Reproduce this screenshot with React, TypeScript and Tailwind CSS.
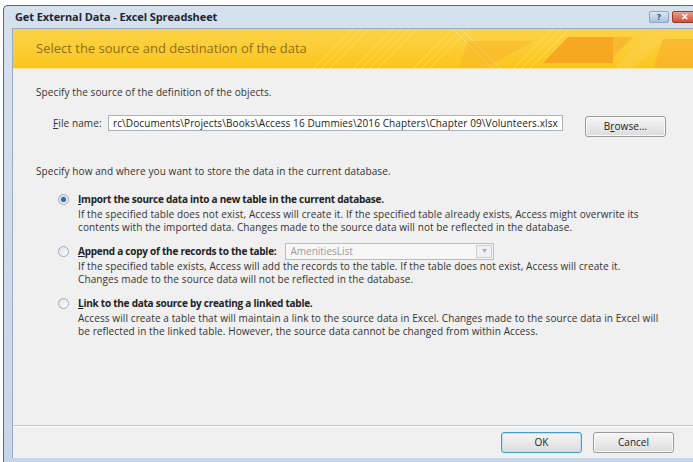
import React from 'react';

const font = { fontFamily: '"Open Sans", "Liberation Sans", sans-serif' };

const Radio = ({ checked }: { checked?: boolean }) => (
  <span className="w-[11px] h-[11px] rounded-full border border-[#a4a9b0] bg-gradient-to-br from-[#dfe2e6] to-[#fdfdfd] flex items-center justify-center shrink-0">
    {checked && <span className="w-[5px] h-[5px] rounded-full bg-[#2f6fb5] shadow-[0_0_2px_#5ea0e6]" />}
  </span>
);

const Button = ({ children, primary }: { children: React.ReactNode; primary?: boolean }) => (
  <button
    className={`w-[81px] h-[21px] rounded-[3px] border text-[10px] text-[#222] bg-gradient-to-b from-[#f6f6f6] to-[#dcdcdc] flex items-center justify-center ${
      primary ? 'border-[#4d9bc4] shadow-[inset_0_0_0_1px_#b9e0f3]' : 'border-[#9a9a9a] shadow-[inset_0_0_0_1px_#fafafa]'
    }`}
  >
    {children}
  </button>
);

const Option = ({
  checked,
  label,
  lines,
  extra,
}: {
  checked?: boolean;
  label: React.ReactNode;
  lines: string[];
  extra?: React.ReactNode;
}) => (
  <div className="flex flex-col">
    <div className="flex items-center h-[14px] pl-[22px]">
      <Radio checked={checked} />
      <span className="ml-[9px] font-bold text-[10px] text-[#222] tracking-[-0.25px]">{label}</span>
      {extra}
    </div>
    <div className="pl-[42px] pt-[2px] text-[10px] leading-[13px] text-[#333]">
      {lines.map((l, i) => (
        <div key={i}>{l}</div>
      ))}
    </div>
  </div>
);

export default function App() {
  return (
    <div className="w-[693px] h-[462px] bg-white overflow-hidden pt-[5px] pl-[3px]" style={font}>
      <div className="w-[710px] h-[457px] border-l border-t border-[#5f6a78] rounded-tl-[5px] bg-gradient-to-b from-[#d6e1ee] to-[#c6d6ea] flex flex-col">
        {/* title bar */}
        <div className="h-[22px] flex items-center pl-[11px] relative">
          <span className="font-bold text-[11px] text-[#1d2633] tracking-[-0.1px]">Get External Data - Excel Spreadsheet</span>
          <div className="absolute left-[645px] top-[5px] flex gap-[3px]">
            <span className="w-[20px] h-[12px] rounded-[2px] bg-gradient-to-b from-[#dbe8f5] to-[#a9c1dd] border border-[#8ea6c4] text-[9px] leading-[10px] text-[#2c4f7c] font-bold flex justify-center">?</span>
            <span className="w-[26px] h-[12px] rounded-[2px] bg-gradient-to-b from-[#e8a08e] to-[#c8503a] border border-[#9d3a2a] text-[9px] leading-[10px] text-white font-bold flex justify-center">✕</span>
          </div>
        </div>

        {/* body */}
        <div className="flex-1 ml-[8px] mb-[4px] border-l border-t border-[#9aaac0] bg-[#f0f0f0] flex flex-col">
          {/* banner */}
          <div className="h-[40px] relative bg-gradient-to-b from-[#fcd347] to-[#fbc617] border-b border-[#fde89a] flex items-center pl-[23px] overflow-hidden">
            <svg className="absolute inset-0" width="700" height="40" viewBox="0 0 700 40">
              <g stroke="#fde690" strokeWidth="0.8" opacity="0.8">
                <line x1="300" y1="40" x2="340" y2="0" />
                <line x1="308" y1="40" x2="348" y2="0" />
                <line x1="316" y1="40" x2="356" y2="0" />
                <line x1="340" y1="40" x2="380" y2="0" />
                <line x1="348" y1="40" x2="388" y2="0" />
                <line x1="356" y1="40" x2="396" y2="0" />
                <line x1="364" y1="40" x2="404" y2="0" />
                <line x1="400" y1="40" x2="440" y2="0" />
                <line x1="408" y1="40" x2="448" y2="0" />
                <line x1="416" y1="40" x2="456" y2="0" />
                <line x1="440" y1="0" x2="480" y2="40" />
                <line x1="448" y1="0" x2="488" y2="40" />
                <line x1="500" y1="40" x2="540" y2="0" />
                <line x1="508" y1="40" x2="548" y2="0" />
                <line x1="516" y1="40" x2="556" y2="0" />
              </g>
              <polygon points="455,12 520,12 470,40 445,40" fill="#f9b52a" opacity="0.55" />
              <polygon points="555,8 600,8 600,34 530,34" fill="#f5a11f" opacity="0.85" />
              <polygon points="600,8 620,8 600,28" fill="#f7b02e" opacity="0.7" />
              <polygon points="650,10 700,10 700,40 640,40" fill="#f8ac2a" opacity="0.6" />
              <polygon points="600,40 640,0 660,0 620,40" fill="#fcd04a" opacity="0.6" />
            </svg>
            <span className="relative text-[13px] text-[#8f6e1c]">Select the source and destination of the data</span>
          </div>

          {/* content */}
          <div className="flex-1 flex flex-col pl-[23px] text-[10px] text-[#333] tracking-[0.1px]">
            <div className="mt-[16px] h-[14px] leading-[14px]">Specify the source of the definition of the objects.</div>

            <div className="mt-[16px] flex items-start">
              <span className="w-[72px] h-[16px] pl-[17px] flex items-center">
                <span>
                  <span className="underline">F</span>ile name:
                </span>
              </span>
              <div className="w-[455px] h-[16px] bg-white border border-[#a9b3bd] flex items-center px-[4px] overflow-hidden whitespace-nowrap text-[#222]">
                rc\Documents\Projects\Books\Access 16 Dummies\2016 Chapters\Chapter 09\Volunteers.xlsx
              </div>
              <span className="ml-[22px] mt-[1px]">
                <Button>
                  B<span className="underline">r</span>owse...
                </Button>
              </span>
            </div>

            <div className="mt-[27px] h-[14px] leading-[14px]">Specify how and where you want to store the data in the current database.</div>

            <div className="mt-[14px] flex flex-col gap-[10px]">
              <Option
                checked
                label={
                  <>
                    <span className="underline">I</span>mport the source data into a new table in the current database.
                  </>
                }
                lines={[
                  'If the specified table does not exist, Access will create it. If the specified table already exists, Access might overwrite its',
                  'contents with the imported data. Changes made to the source data will not be reflected in the database.',
                ]}
              />
              <Option
                label={
                  <>
                    <span className="underline">A</span>ppend a copy of the records to the table:
                  </>
                }
                extra={
                  <div className="ml-[9px] w-[209px] h-[17px] border border-[#b5bdc6] bg-[#f7f7f7] flex items-center text-[#9a9a9a] text-[10px] tracking-normal">
                    <span className="flex-1 pl-[4px]">AmenitiesList</span>
                    <span className="w-[16px] h-[13px] mr-[1px] border border-[#c9ced4] bg-[#eef0f2] flex items-center justify-center text-[7px] text-[#9aa]">▼</span>
                  </div>
                }
                lines={[
                  'If the specified table exists, Access will add the records to the table. If the table does not exist, Access will create it.',
                  'Changes made to the source data will not be reflected in the database.',
                ]}
              />
              <Option
                label={
                  <>
                    <span className="underline">L</span>ink to the data source by creating a linked table.
                  </>
                }
                lines={[
                  'Access will create a table that will maintain a link to the source data in Excel. Changes made to the source data in Excel will',
                  'be reflected in the linked table. However, the source data cannot be changed from within Access.',
                ]}
              />
            </div>
          </div>

          {/* footer */}
          <div className="border-t border-[#c6c6c6] shadow-[inset_0_1px_0_#ffffff] h-[33px] flex items-start pt-[6px] pl-[488px] gap-[11px]">
            <Button primary>OK</Button>
            <Button>Cancel</Button>
          </div>
        </div>
      </div>
    </div>
  );
}
